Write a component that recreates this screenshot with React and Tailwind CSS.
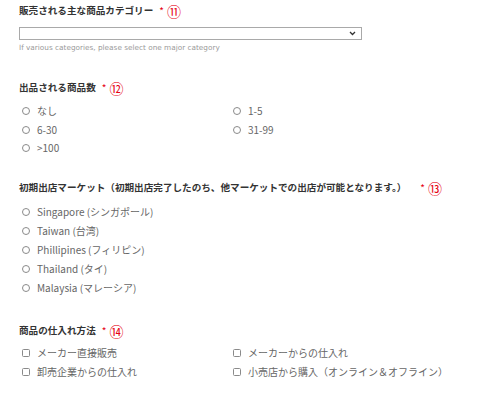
import React from "react";

const Radio = () => (
  <span className="inline-block w-[8px] h-[8px] rounded-full border border-[#8a8a8a] bg-white shrink-0" />
);
const Check = () => (
  <span className="inline-block w-[8px] h-[8px] rounded-[1.5px] border border-[#8a8a8a] bg-white shrink-0" />
);

const Title = ({ text, num, className = "", starGap = "ml-[6px]" }) => (
  <div className={"flex items-center h-[14px] text-[9.6px] font-bold text-[#333] leading-none whitespace-nowrap " + className}>
    <span>{text}</span>
    <span className={"text-[#e60012] text-[10px] font-normal " + starGap}>*</span>
    <span className="ml-[3px] text-[#e60012] text-[14px] font-normal leading-none">{num}</span>
  </div>
);

const Opt = ({ children, box = "radio", h = "h-[19px]" }) => (
  <div className={"flex items-center pl-[3px] text-[10px] text-[#666] leading-none whitespace-nowrap " + h}>
    {box === "radio" ? <Radio /> : <Check />}
    <span className="ml-[7px]">{children}</span>
  </div>
);

export default function App() {
  return (
    <div
      className="w-[484px] h-[397px] bg-white pl-[19px] pt-[4px] overflow-hidden"
      style={{ fontFamily: '"Noto Sans CJK JP", "Noto Sans", sans-serif' }}
    >
      <Title text="販売される主な商品カテゴリー" num="⑪" />
      <div className="mt-[9px] w-[343px] h-[13px] border border-[#a9a9a9] bg-white flex items-center justify-end pr-[5px]">
        <svg width="7" height="5" viewBox="0 0 7 5">
          <path d="M1 1 L3.5 3.5 L6 1" fill="none" stroke="#333" strokeWidth="1.3" />
        </svg>
      </div>
      <div
        className="mt-[3px] h-[10px] text-[7.3px] leading-[10px] text-[#9a9a9a] whitespace-nowrap"
        style={{ fontFamily: '"DejaVu Sans", sans-serif' }}
      >
        If various categories, please select one major category
      </div>

      <Title text="出品される商品数" num="⑫" className="mt-[28px]" />
      <div className="mt-[7px] grid grid-cols-[211px_211px]">
        <Opt h="h-[18.5px]">なし</Opt>
        <Opt h="h-[18.5px]">1-5</Opt>
        <Opt h="h-[18.5px]">6-30</Opt>
        <Opt h="h-[18.5px]">31-99</Opt>
        <Opt h="h-[18.5px]">&gt;100</Opt>
      </div>

      <Title
        text="初期出店マーケット（初期出店完了したのち、他マーケットでの出店が可能となります。）"
        num="⑬"
        className="mt-[23.5px]"
        starGap="ml-[14px]"
      />
      <div className="mt-[7px]">
        <Opt>Singapore (シンガポール)</Opt>
        <Opt>Taiwan (台湾)</Opt>
        <Opt>Phillipines (フィリピン)</Opt>
        <Opt>Thailand (タイ)</Opt>
        <Opt>Malaysia (マレーシア)</Opt>
      </div>

      <Title text="商品の仕入れ方法" num="⑭" className="mt-[27px]" />
      <div className="mt-[5px] grid grid-cols-[211px_211px]">
        <Opt box="check">メーカー直接販売</Opt>
        <Opt box="check">メーカーからの仕入れ</Opt>
        <Opt box="check">卸売企業からの仕入れ</Opt>
        <Opt box="check">小売店から購入（オンライン＆オフライン）</Opt>
      </div>
    </div>
  );
}
